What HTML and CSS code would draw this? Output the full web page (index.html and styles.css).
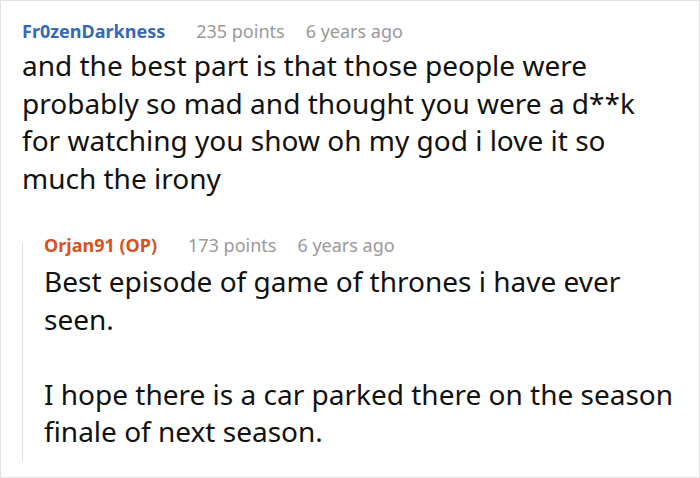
FILE: index.html
```html
<!DOCTYPE html>
<html>
<head>
<meta charset="utf-8">
<link rel="stylesheet" href="styles.css">
</head>
<body>
<div class="frame">
  <div class="comment">
    <div class="meta">
      <span class="user">Fr0zenDarkness</span>
      <span class="info">235 points</span>
      <span class="info">6 years ago</span>
    </div>
    <p class="text">and the best part is that those people were probably so mad and thought you were a d**k for watching you show oh my god i love it so much the irony</p>
    <div class="reply">
      <div class="meta">
        <span class="user op">Orjan91 (OP)</span>
        <span class="info">173 points</span>
        <span class="info">6 years ago</span>
      </div>
      <p class="text">Best episode of game of thrones i have ever seen.</p>
      <p class="text">I hope there is a car parked there on the season finale of next season.</p>
    </div>
  </div>
</div>
</body>
</html>
```
FILE: styles.css
```css
html, body {
  margin: 0;
  padding: 0;
  background: #fff;
}
.frame {
  box-sizing: border-box;
  width: 700px;
  height: 478px;
  border: 1px solid #e2e2e2;
  overflow: hidden;
  font-family: "Noto Sans", "Open Sans", sans-serif;
  color: #111;
}
.comment {
  padding: 17px 14px 0 21px;
}
.meta {
  display: flex;
  gap: 21px;
  font-size: 18px;
  line-height: 26px;
  align-items: baseline;
}
.user {
  font-weight: 700;
  color: #3569b8;
  margin-right: 10px;
}
.user.op {
  color: #d4531f;
}
.info {
  color: #999;
}
.text {
  margin: 0;
  font-size: 28px;
  line-height: 37.5px;
}
.comment > .text {
  margin-top: 3px;
  max-width: 625px;
}
.reply {
  display: flex;
  flex-direction: column;
  margin-top: 46px;
  border-left: 1px solid #e0e0e0;
  padding-left: 21px;
  padding-bottom: 10px;
}
.reply .meta {
  margin-top: -11px;
}
.reply .meta + .text {
  margin-top: 5px;
}
.reply .text {
  margin-bottom: 37.5px;
}
.reply .text:last-child {
  margin-bottom: 0;
}
```
